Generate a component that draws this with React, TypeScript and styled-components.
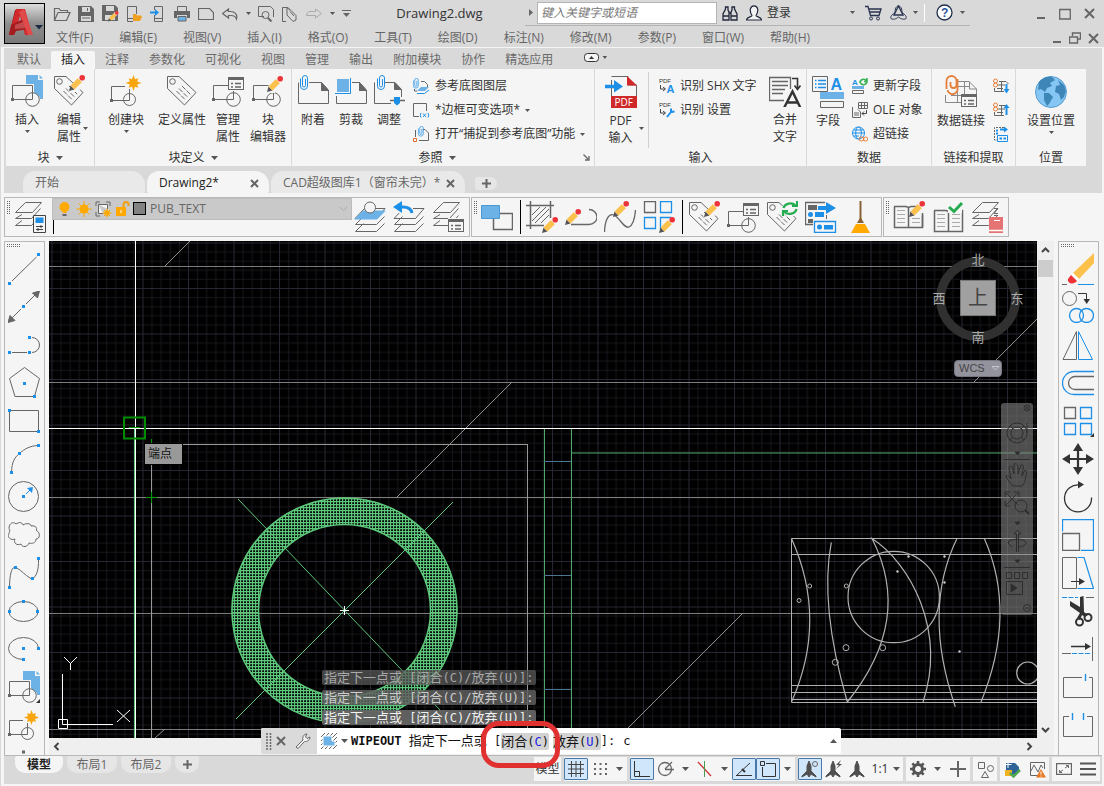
import React from "react";
import styled, { createGlobalStyle } from "styled-components";

const G = "#666666";
const B = "#1e8fe6";
const LB = "#6cb2e6";
const GREEN = "#5cc67a";

const GlobalStyle = createGlobalStyle`
  * { box-sizing: border-box; }
  body { margin: 0; background: #f5f5f5; }
  button, input, select { font: inherit; color: inherit; margin: 0; padding: 0; border: 0; background: none; }
  button { cursor: default; }
  svg { display: block; flex: none; }
`;

/* ---------- layout ---------- */
const Shell = styled.div`
  min-height: 100vh;
  display: flex;
  flex-direction: column;
  font: 12px/16px "Open Sans", "Noto Sans CJK SC", sans-serif;
  color: #333;
  background: #f5f5f5;
  overflow: hidden;
`;
const Header = styled.header`
  display: flex;
  height: 47px;
  background: #d9d9d9;
  padding-left: 4px;
`;
const Logo = styled.button`
  width: 41px;
  height: 41px;
  margin-top: 3px;
  border: 1px solid #000;
  background: linear-gradient(#dcdcdc, #8e8e8e 50%, #7a7a7a);
`;
const HeaderRows = styled.div`flex: 1; min-width: 0;`;
const TitleRow = styled.div`display: flex; height: 27px; padding: 0 3px 0 5px;`;
const Tools = styled.div`display: flex; align-items: center; height: 27px;`;
const IconButton = styled.button<{ $w?: number }>`
  display: flex;
  align-items: center;
  justify-content: center;
  flex: none;
  width: ${p => p.$w ?? 24}px;
  height: 24px;
`;
const Title = styled.h1`
  flex: 1;
  margin: 0;
  font-size: 13px;
  font-weight: 400;
  line-height: 26px;
  text-align: center;
  white-space: nowrap;
`;
const InfoCenter = styled.div`
  display: flex;
  align-items: center;
  width: 445px;
  height: 26px;
  border-bottom: 1px solid #b4b4b4;
`;
const Search = styled.input`
  width: 180px;
  height: 22px;
  margin-right: 1px;
  padding: 0 3px;
  background: #fff;
  border: 1px solid #b4b4b4;
  &::placeholder { color: #767676; font-style: italic; opacity: 1; }
`;
const Login = styled.button`width: 78px; text-align: left; padding-left: 1px;`;
const VRule = styled.i`width: 1px; height: 18px; background: #fff; margin: 0 5px 0 4px;`;
const WindowButtons = styled.div`
  display: flex;
  align-items: center;
  height: 27px;
  margin-left: 59px;
`;
const MenuRow = styled.nav`
  display: flex;
  align-items: center;
  height: 20px;
  gap: 26px;
  padding: 2px 0 0 11px;
  color: #666;
`;
const MenuEnd = styled.div`display: flex; margin-left: auto; padding-right: 2px;`;

const Frame = styled.div`
  flex: 1;
  display: flex;
  flex-direction: column;
  padding: 1px 2px 2px 3px;
  border-left: 1px solid #d9d9d9;
`;
const RibbonTabs = styled.nav`
  display: flex;
  align-items: flex-end;
  height: 21px;
  padding-left: 3px;
  background: #d9d9d9;
`;
const RibbonTab = styled.button<{ $on?: boolean }>`
  height: 18px;
  padding: 0 10px;
  line-height: 18px;
  border-radius: 2px 2px 0 0;
  color: ${p => (p.$on ? "#222" : "#6a6a6a")};
  background: ${p => (p.$on ? "#f5f5f5" : "transparent")};
`;
const Ribbon = styled.div`
  display: flex;
  gap: 1px;
  height: 97px;
  padding-left: 2px;
  background: #d9d9d9;
`;
const Panel = styled.section<{ $w: number }>`
  width: ${p => p.$w}px;
  flex: none;
  display: flex;
  flex-direction: column;
  background: #f5f5f5;
`;
const PanelBody = styled.div<{ $pl?: number }>`
  flex: 1;
  display: flex;
  padding-left: ${p => p.$pl ?? 0}px;
`;
const PanelTitle = styled.div<{ $pr?: number }>`
  position: relative;
  display: flex;
  align-items: center;
  justify-content: center;
  gap: 6px;
  height: 17px;
  padding-right: ${p => p.$pr ?? 0}px;
`;
const Launcher = styled.button`position: absolute; right: 4px; top: 5px;`;
const Big = styled.button<{ $w: number }>`
  position: relative;
  width: ${p => p.$w}px;
  display: flex;
  flex-direction: column;
  align-items: center;
  padding-top: 6px;
  line-height: 17px;
  white-space: nowrap;
  & > svg:first-child { margin-bottom: 4px; }
`;
const CornerCaret = styled.span`position: absolute; right: 2px; top: 58px;`;
const UnderCaret = styled.span`margin-top: 2px;`;
const SmallCol = styled.div<{ $ml?: number; $w?: number }>`
  margin-left: ${p => p.$ml ?? 0}px;
  width: ${p => (p.$w ? p.$w + "px" : "auto")};
  padding-top: 5px;
`;
const Small = styled.button`
  display: flex;
  align-items: center;
  gap: 5px;
  height: 24px;
  white-space: nowrap;
`;
const PanelRule = styled.i`width: 1px; margin: 3px 10px 1px 2px; background: #d0d0d0;`;

const DocTabs = styled.nav`
  display: flex;
  align-items: flex-end;
  height: 27px;
  padding-left: 17px;
  background: #d9d9d9;
`;
const DocTab = styled.button<{ $on?: boolean; $w: number }>`
  display: flex;
  align-items: center;
  justify-content: space-between;
  width: ${p => p.$w}px;
  height: 22px;
  padding: 2px 10px 0 12px;
  white-space: nowrap;
  color: ${p => (p.$on ? "#222" : "#666")};
  background: ${p => (p.$on ? "#f5f5f5" : "#e9e9e9")};
  border-radius: 12px 14px 2px 2px;
  margin-left: 2px;
`;
const NewDoc = styled.button`
  display: flex;
  align-items: center;
  justify-content: center;
  width: 22px;
  height: 13px;
  margin: 0 0 3px 10px;
  border-radius: 3px 8px 8px 3px;
  background: #e6e6e6;
`;

const ToolRow = styled.div`display: flex; gap: 1px; height: 48px; padding: 4px 0;`;
const ToolBox = styled.div`
  display: flex;
  align-items: center;
  height: 40px;
  border: 1px solid #b8b8b8;
  & > svg { align-self: flex-start; }
`;
const ToolButton = styled.button`
  display: flex;
  align-items: center;
  width: 39px;
  height: 38px;
  padding-left: 2px;
  flex: none;
`;
const ToolRule = styled.i`width: 1px; height: 34px; margin: 0 3px 0 2px; background: #000;`;
const ComboCell = styled.div`width: 301px; height: 38px; padding-left: 1px;`;
const Combo = styled.label`
  display: flex;
  align-items: center;
  height: 22px;
  background: #c9c9c9;
  border: 1px solid #bdbdbd;
  padding-left: 3px;
  gap: 3px;
  color: #666;
`;
const LayerSelect = styled.select`flex: 1; appearance: none; height: 20px; outline: 0;`;
const TextCaret = styled.i`display: block; width: 1px; height: 14px; margin-left: 1px; background: #000;`;

const Workspace = styled.main`flex: 1; display: flex; min-height: 514px; padding-right: 3px;`;
const SideBox = styled.div`
  width: 41px;
  flex: none;
  border: 1px solid #b8b8b8;
  border-bottom: 0;
  display: flex;
  flex-direction: column;
  align-items: flex-start;
  height: 514px;
  overflow: hidden;
`;
const SideButton = styled.button`
  display: flex;
  align-items: center;
  justify-content: center;
  width: 38px;
  height: 38px;
  flex: none;
`;
const SideGrip = styled.div`flex: none; height: 8px; padding: 2px 0 0 2px;`;
const Center = styled.div`
  position: relative;
  flex: 1;
  min-width: 0;
  margin: 0 4px;
  display: grid;
  grid-template-columns: 1fr 17px;
  grid-template-rows: 1fr 17px;
`;
const Canvas = styled.div`position: relative; overflow: hidden; background: #000;`;
const Sheet = styled.svg`position: absolute; left: 0; top: 0; width: 100%; height: 100%;`;
const VScroll = styled.div`
  display: flex;
  flex-direction: column;
  align-items: center;
  justify-content: space-between;
  background: #efefef;
  padding: 6px 0 5px;
`;
const Thumb = styled.i`width: 15px; height: 17px; margin: 7px 0 auto; background: #cdcdcd;`;
const HScroll = styled.div`
  grid-column: 1 / 3;
  display: flex;
  align-items: center;
  justify-content: space-between;
  padding: 0 21px 0 4px;
  background: #efefef;
`;
const Tip = styled.div`
  position: absolute;
  left: 95px;
  top: 202px;
  width: 39px;
  height: 22px;
  padding-left: 3px;
  line-height: 20px;
  background: #999;
  color: #111;
  border: 1px solid #000;
`;
const Compass = styled.div`
  position: absolute;
  right: 13px;
  top: 10px;
  width: 92px;
  height: 126px;
  display: grid;
  grid-template: 16px 62px 16px 1fr / 14px 1fr 14px;
  place-items: center;
  color: #aaa;
  font-size: 13px;
`;
const Ring = styled.i`
  position: absolute;
  left: 4px;
  top: 6px;
  width: 84px;
  height: 84px;
  border: 9px solid #303030;
  border-radius: 50%;
`;
const North = styled.span`position: relative; grid-area: 1 / 2;`;
const West = styled.span`position: relative; grid-area: 2 / 1;`;
const Top = styled.button`
  position: relative;
  grid-area: 2 / 2;
  width: 36px;
  height: 36px;
  background: #a0a0a0;
  border: 1px solid #777;
  color: #444;
  font-size: 20px;
  line-height: 32px;
`;
const East = styled.span`position: relative; grid-area: 2 / 3;`;
const South = styled.span`position: relative; grid-area: 3 / 2;`;
const Wcs = styled.button`
  grid-area: 4 / 1 / 5 / 4;
  align-self: end;
  display: flex;
  align-items: center;
  gap: 7px;
  width: 48px;
  height: 17px;
  padding-left: 4px;
  border: 1px solid #777784;
  border-radius: 4px;
  background: #93939d;
  color: #444;
  font: 11px/15px "Liberation Sans", sans-serif;
`;
const NavBar = styled.div`
  position: absolute;
  right: 4px;
  top: 162px;
  width: 32px;
  height: 212px;
  border-radius: 3px;
  background: rgba(130, 130, 130, 0.6);
`;
const mono = `font-family: "DejaVu Sans Mono", "Noto Sans CJK SC", monospace; font-size: 12px;`;
const Han = styled.span`font-size: 13px;`;
const History = styled.div`
  position: absolute;
  left: 273px;
  bottom: 30px;
  display: flex;
  flex-direction: column;
  gap: 5px;
  ${mono}
`;
const Past = styled.div<{ $c: string; $bg: string }>`
  height: 15px;
  padding: 0 2px;
  line-height: 15px;
  border-radius: 2px;
  white-space: pre;
  color: ${p => p.$c};
  background: ${p => p.$bg};
`;
const Command = styled.form`
  position: absolute;
  left: 212px;
  bottom: 1px;
  width: 580px;
  height: 26px;
  display: flex;
  align-items: center;
  background: #fff;
  color: #111;
  border-radius: 2px;
  overflow: hidden;
  white-space: pre;
  ${mono}
`;
const CommandHead = styled.div`
  display: flex;
  align-items: center;
  width: 56px;
  height: 26px;
  padding-left: 5px;
  background: #dadada;
`;
const Prompt = styled.span`margin-left: 3px;`;
const Option = styled.button`
  height: 17px;
  line-height: 17px;
  border-radius: 2px;
  background: #d3d3d3;
  margin-right: 4px;
  & + & { margin-right: 0; }
  b { font-weight: 400; color: #1a1ae0; }
`;
const CommandInput = styled.input`flex: 1; min-width: 0; outline: 0; padding-left: 8px;`;
const Highlight = styled.i`
  position: absolute;
  z-index: 2;
  left: 432px;
  bottom: -13px;
  width: 79px;
  height: 47px;
  border: 5px solid #e0302f;
  border-radius: 18px;
`;

const Footer = styled.footer`
  display: flex;
  height: 29px;
  padding: 0 2px 0 11px;
  background: #d9d9d9;
  border-top: 1px solid #b8b8b8;
`;
const LayoutTab = styled.button<{ $on?: boolean; $w?: number }>`
  display: flex;
  align-items: center;
  justify-content: center;
  width: ${p => p.$w ?? 50}px;
  margin-right: 4px;
  height: 17px;
  color: ${p => (p.$on ? "#222" : "#666")};
  font-weight: ${p => (p.$on ? 700 : 400)};
  background: ${p => (p.$on ? "#f5f5f5" : "#e6e6e6")};
  border-radius: 2px 2px 10px 10px;
`;
const Status = styled.div`display: flex; gap: 3px; margin-left: auto; height: 26px; padding-top: 1px;`;
const Group = styled.div`display: flex; align-items: center; height: 24px; background: #f5f5f5;`;
const StatusButton = styled.button<{ $on?: boolean; $w?: number }>`
  display: flex;
  align-items: center;
  justify-content: center;
  width: ${p => p.$w ?? 24}px;
  height: ${p => (p.$on ? 22 : 24)}px;
  white-space: nowrap;
  background: ${p => (p.$on ? "#cfe6fb" : "none")};
  border: ${p => (p.$on ? "1px solid #4a78a8" : "0")};
  border-radius: 1px;
`;

/* ---------- icon primitives ---------- */
type IcoProps = { w?: number; h?: number; children: React.ReactNode };
const Ico = ({ w = 32, h, children }: IcoProps) => (
  <svg width={w} height={h ?? w} viewBox={`0 0 ${w} ${h ?? w}`} fill="none" stroke={G} strokeWidth="1" aria-hidden="true">{children}</svg>
);
const Caret = () => (
  <svg width="5" height="3" viewBox="0 0 5 3" fill="#555" aria-hidden="true"><path d="M0 0h5L2.500 3z" /></svg>
);
const CaretL = ({ up }: { up?: boolean }) => (
  <svg width="7" height="4" viewBox="0 0 7 4" fill="#555" aria-hidden="true"><path d={up ? "M0 4h7L3.500 0z" : "M0 0h7L3.500 4z"} /></svg>
);
const Dot = ({ x, y, c = B }: { x: number; y: number; c?: string }) => <rect x={x - 1.5} y={y - 1.5} width="3" height="3" fill={c} stroke="none" />;
const Pencil = ({ x, y }: { x: number; y: number }) => (
  <g transform={`translate(${x} ${y})`} stroke="none">
    <path d="M0 16L1.500 10.500L5.500 14.500Z" fill="#555" />
    <path d="M1.500 10.500L9 3L13 7L5.500 14.500Z" fill="#fcc04c" />
    <path d="M9 3L10.500 1.500L14.500 5.500L13 7Z" fill="#fff" />
    <circle cx="13.200" cy="2.800" r="2.800" fill="#ee3338" />
  </g>
);
const Star = ({ x, y, r }: { x: number; y: number; r: number }) => {
  const pts = Array.from({ length: 16 }, (_, i) => {
    const q = i % 2 ? r * 0.5 : i % 4 ? r * 0.85 : r;
    const a = (i * Math.PI) / 8;
    return `${(x + q * Math.sin(a)).toFixed(1)},${(y - q * Math.cos(a)).toFixed(1)}`;
  }).join(" ");
  return <polygon points={pts} fill="#f7a50a" stroke="none" />;
};
const TagShape = () => (
  <>
    <path d="M1.500 1.500H13L30 17.500L18.500 30L1.500 13.500Z" />
    <circle cx="6.500" cy="6.500" r="2.800" />
    <path d="M16 11L25 20M13 13.500L22 22.500M10.500 16L19.500 25" strokeDasharray="5 1.500" />
  </>
);
const ListCard = ({ x, y }: { x: number; y: number }) => (
  <g transform={`translate(${x} ${y})`}>
    <rect x=".5" y=".5" width="15" height="12" fill="#f5f5f5" />
    <path d="M0 1.500H16" strokeWidth="3" />
    <path d="M3 6.500h2M7 6.500h6M3 10h2M7 10h6" strokeWidth="1.500" />
  </g>
);
const BlockShape = ({ solid }: { solid?: boolean }) => (
  <>
    {solid && <path d="M0 9H23V17L29 22V31H0Z" fill="#f5f5f5" stroke="none" />}
    <path d="M1.500 10.500H21.500V24.500H1.500Z" />
    <circle cx="21.500" cy="24.500" r="6.800" />
    <Dot x={1.500} y={24.500} c={G} />
  </>
);
const PageShape = () => <path d="M1.500 7.500V28.500H31.500V15.500L24.500 7.500H12M24.500 7.500V15.500H31.500Z" />;
const Layers = ({ fill = "none" }: { fill?: string }) => (
  <>
    <path d="M9.500 15.500L1.500 23.500H22.500L30.500 15.500M9.500 22.500L1.500 30.500H22.500L30.500 22.500" />
    <path d="M10.500 7.500H31L22.500 17.500H1Z" fill={fill} />
  </>
);
const LayersTop = () => (
  <>
    <path d="M11.500 1.500H27.500L18.500 11.500H1.500Z" />
    <path d="M8 13.500L1.500 17.500H17.500L26.500 7.500M8 19.500L1.500 24.500H17.500L26.500 14.500" />
  </>
);
const BookShape = () => (
  <>
    <path d="M2 9.500H14L16.500 10.500L19 9.500H30.500V30.500H2.500V9.500M16.500 10.500V31" strokeWidth="1.500" />
    <path d="M5 13.500h8M5 17.500h8M5 21.500h8M5 25.500h8M20 13.500h8M20 17.500h8M20 21.500h8M20 25.500h8" stroke="#aaa" />
  </>
);
const Grip = ({ horizontal }: { horizontal?: boolean }) => (
  <svg width={horizontal ? 14 : 7} height={horizontal ? 4 : 16} fill={G} aria-hidden="true">
    {Array.from({ length: 7 }, (_, i) => [0, 2].map(j => (
      <rect key={`${i}-${j}`} x={horizontal ? i * 2 : j + 2} y={horizontal ? j : i * 2 + 3} width="1" height="1" />
    )))}
  </svg>
);
const Cross = ({ s = 9, t = 2 }: { s?: number; t?: number }) => <Ico w={s}><path d={`M1 1L${s - 1} ${s - 1}M${s - 1} 1L1 ${s - 1}`} strokeWidth={t} /></Ico>;
const Plus = ({ s = 9, t = 2 }: { s?: number; t?: number }) => <Ico w={s}><path d={`M${s / 2} 0V${s}M0 ${s / 2}H${s}`} strokeWidth={t} /></Ico>;
const Clip = ({ x, y, c = B }: { x: number; y: number; c?: string }) => (
  <path transform={`translate(${x} ${y})`} stroke={c} d="M0.500 3.500V11a3.500 3.500 0 0 0 7 0V3a2.500 2.500 0 0 0-5 0V10.500a1.500 1.500 0 0 0 3 0V4" />
);

/* ---------- quick access icons ---------- */
const quick: [string, React.ReactNode][] = [
  ["打开", <Ico w={18} h={16}><path d="M1.500 14.500V2.500H6L7.500 4.500H14.500V6.500M1.500 14.500L5 6.500H17L13.500 14.500Z" strokeWidth="1.200" /></Ico>],
  ["保存", <Ico w={16}><path d="M0 0H13L16 3V16H0Z" fill={G} stroke="none" /><path d="M4 1H12V6H4ZM3 10H13V15H3Z" fill="#d9d9d9" stroke="none" /><path d="M4 12h8M9.500 2v3" /></Ico>],
  ["另存为", <Ico w={17}><path d="M0 0H13L16 3V16H0Z" fill={G} stroke="none" /><path d="M4 1H12V6H4ZM3 10H13V15H3Z" fill="#d9d9d9" stroke="none" /><g transform="translate(6 6) scale(.66)"><Pencil x={0} y={0} /></g></Ico>],
  ["从移动设备打开", <Ico w={16}><path d="M1.500 .5H10.500V8M1.500 .5V15.500H7" /><path d="M2 12.500H7" /><path d="M7 15V8H10L11 9.500H15L16 11L14 15Z" fill="#f0a020" stroke="none" /></Ico>],
  ["保存到移动设备", <Ico w={16}><path d="M4.500 4V.5H12.500V15.500H4.500V9M4.500 12.500H12.500" /><path d="M0 6.500H7" stroke={B} strokeWidth="2" /><path d="M5 3L9 6.500L5 10Z" fill={B} stroke="none" /></Ico>],
  ["打印", <Ico w={16}><path d="M3.500 5V.5H12.500V5" /><path d="M0 5H16V12H13V9H3V12H0Z" fill={G} stroke="none" /><path d="M4 10.500H12V15H4Z" fill={LB} stroke={G} /></Ico>],
  ["新建", <Ico w={16}><path d="M.5 2.500H11.500L15.500 6.500V13.500H.5Z" strokeWidth="1.200" /></Ico>],
  ["放弃", <Ico w={16}><path d="M6.500 3L.5 7.500L6.500 12V9.500H9C12 9.500 13.500 10 14.500 13C16 8 12 5.500 9 5.500H6.500Z" strokeWidth="1.200" /></Ico>],
];
const quick2: [string, React.ReactNode][] = [
  ["打印预览", <Ico w={16}><path d="M6 10.500H.5V.5H12.500L15.500 3.500V11" /><circle cx="7.500" cy="9" r="3.500" /><path d="M10 12L13.500 15.500" strokeWidth="2" /></Ico>],
  ["批处理打印", <Ico w={16}><path d="M4 15.500H.5V1.500H5L8 4.500" /><path d="M6 1.500L14 9.500V14L11 15.500L5 9V2Z" /><path d="M8 5.500L12 10" /></Ico>],
];

/* ---------- ribbon icons ---------- */
const PageBack = () => <><path d="M15 0H27V5H32V24H15Z" fill={LB} stroke="none" /><path d="M28.500 0L32 3.500H28.500Z" fill={LB} stroke="none" /></>;
const InsertIcon = () => <Ico><PageBack /><BlockShape solid /></Ico>;
const CreateIcon = () => <Ico><path d="M1.500 11.500H19.500V25.500H1.500Z" /><circle cx="19.500" cy="24.500" r="6" /><Dot x={1.500} y={25.500} c={G} /><path d="M15 2h6v12h-6z" fill="#f5f5f5" stroke="none" /><Star x={23.500} y={8} r={8} /></Ico>;
const TagIcon = ({ extra }: { extra?: React.ReactNode }) => <Ico><TagShape />{extra}</Ico>;
const TagPencilIcon = () => <TagIcon extra={<><path d="M15 16L31 0h1v12L20 18z" fill="#f5f5f5" stroke="none" /><Pencil x={16} y={0} /></>} />;
const BlockCardIcon = () => <Ico><BlockShape /><path d="M16 0h16v16H16z" fill="#f5f5f5" stroke="none" /><ListCard x={16} y={2} /></Ico>;
const BlockEditIcon = () => <Ico><BlockShape /><path d="M14 18L17 9h6v9z" fill="#f5f5f5" stroke="none" /><Pencil x={15} y={1} /></Ico>;
const AttachIcon = () => <Ico><PageShape /><path d="M24.500 7.500V15.500H31.500Z" fill={G} /><Clip x={3} y={0} /></Ico>;
const CropIcon = () => <Ico><PageShape /><path d="M24.500 7.500V15.500H31.500Z" fill={G} /><path d="M0 2h17v19H0z" fill="#f5f5f5" stroke="none" /><path d="M2 4H14V17H2Z" fill={LB} stroke="none" /><path d="M15.500 3V18.500H0" stroke={B} /></Ico>;
const AdjustIcon = () => <Ico><path d="M1.500 7.500V28.500H18M12 7.500H22L28.500 14.500V22" /><path d="M21.500 7.500V14.500H28.500Z" fill={G} /><Clip x={4} y={0} /><path d="M17 25.500H32" strokeWidth="1.500" /><path d="M21 22H27V28L24 30.500L21 28Z" fill={B} stroke="none" /></Ico>;
const PdfLabel = styled.text`font: 10px "Open Sans", sans-serif;`;
const PdfIcon = () => (
  <Ico w={34} h={33}>
    <path d="M7.500 1.500H24V10H32.500V21M7.500 5V21" /><path d="M23 1L33 10.500H23Z" fill="#d02828" stroke="none" />
    <path d="M7 21H33V33H7Z" fill="#d02828" stroke="none" />
    <PdfLabel x="10.500" y="31" fill="#fff" stroke="none">PDF</PdfLabel>
    <path d="M1 11.500H12" stroke={B} strokeWidth="3.500" /><path d="M10 5L19 11.500L10 17.500Z" fill={B} stroke="none" />
  </Ico>
);
const TinyText = styled.text`font: 6px "Liberation Sans", sans-serif;`;
const LetterText = styled.text<{ $s: number }>`font: 700 ${p => p.$s}px "Liberation Sans", sans-serif;`;
const ShxIcon = ({ tool }: { tool?: boolean }) => (
  <Ico w={16}>
    <TinyText x="0" y="5" fill="#333" stroke="none">PDF</TinyText>
    <path d="M1.500 7V11H6M4 9L6.500 11L4 13" stroke="#444" />
    {tool ? <path d="M8 15L12 10M12 6.500V10L15.500 9.500" stroke={B} strokeWidth="2" /> : <LetterText $s={11} x="7.500" y="15" fill={B} stroke="none">A</LetterText>}
  </Ico>
);
const MergeIcon = () => (
  <Ico><path d="M15 25.500H.5V2.500H21.500V14M3 6.500h16M3 10.500h16M3 14.500h13M3 18.500h11" strokeWidth="1.300" /><path d="M23 3.500H28.500V13M25.500 10.500L28.500 14.500L31.500 10.500" stroke="#333" strokeWidth="1.600" /><path d="M15 33L23.500 16.500L31.500 33M18 27.500H29" stroke="#333" strokeWidth="2.400" /></Ico>
);
const FieldIcon = () => (
  <Ico h={33}><path d="M.5 1.500H15.500V16.500H.5Z" /><path d="M3 5.500h1.500M3 9h1.500M3 12.500h1.500M6 5.500h8M6 9h8M6 12.500h8" stroke={B} strokeWidth="1.500" /><LetterText $s={16} x="18.500" y="15" fill={B} stroke="none">A</LetterText><path d="M8 17H32V24H8Z" fill={LB} stroke="none" /><path d="M8.500 26.500H31.500V32.500H8.500Z" /></Ico>
);
const UpdateFieldIcon = () => <Ico w={16}><LetterText $s={8} x="0" y="7" fill={B} stroke="none">A</LetterText><path d="M8 5a3.500 3.500 0 0 1 6.500-2M15 3a3.500 3.500 0 0 1-6.500 2M15 0V3.500H12" stroke="#35b050" strokeWidth="1.500" /><path d="M.5 12.500H11.500V15.500H.5Z" /><path d="M0 8H12V11H0Z" fill={LB} stroke="none" /></Ico>;
const OleIcon = () => <Ico w={16}><path d="M6.500 .5H15.500V6.500H6.500ZM6.500 3.500H15.500M9.500 .5V6.500M12.500 .5V6.500M.5 5V15.500H8.500V10L6 7.500M2 11h5M2 13h5" /><path d="M10 11.500H14.500V8M12 9.500L10 11.500L12 13.500" stroke="#444" /></Ico>;
const LinkIcon = () => <Ico w={16}><circle cx="6.500" cy="7" r="6" stroke={B} /><ellipse cx="6.500" cy="7" rx="2.800" ry="6" stroke={B} /><path d="M.5 7H12.500M1.500 4H11.500M1.500 10H7" stroke={B} /><ellipse cx="9.500" cy="13" rx="2.500" ry="2" stroke="#e8803a" /><ellipse cx="13.500" cy="13" rx="2.300" ry="2" stroke="#e8803a" /></Ico>;
const DataLinkIcon = () => (
  <Ico h={33}><path d="M12 6.500H24L31.500 14V20M.5 20V27.500H16M12 11.500H24M6 20.500H18M12.500 6.500V27.500M19.500 6.500V27.500M24.500 6.500V14H31.500" stroke="#888" /><ListCard x={16} y={19} />
    <g stroke="#e57f3c" strokeWidth="1.800"><path d="M1.500 14V6a5 5 0 0 1 10 0V10a3 3 0 0 1-6 0V7" /><path d="M12.500 4V13a5 5 0 0 1-10 2" /></g></Ico>
);
const TableLink = ({ up }: { up?: boolean }) => (
  <Ico w={17} h={16}><circle cx="2.500" cy="3" r="2" stroke="#e57f3c" /><circle cx="2.500" cy="7" r="2" stroke="#e57f3c" /><path d="M6 3.500H13L15.500 6M1.500 10V13.500H11M4 10.500H10M8.500 3.500V13.500M5 7H12" /><path d={up ? "M13.500 13V5" : "M13.500 6V13"} stroke={B} strokeWidth="2" /><path d={up ? "M10.500 6L13.500 2L16.500 6Z" : "M10.500 11L13.500 15.500L16.500 11Z"} fill={B} stroke="none" /></Ico>
);
const ExtractSmall = () => <Ico w={16}><path d="M11 1.500H1.500V14H4" strokeDasharray="2 1" /><path d="M3 4.500h2M3 7.500h2M7 3.500H12" stroke={B} strokeWidth="2" /><path d="M11 .5L15 3.500L11 6.500Z" fill={B} stroke="none" /><path d="M4.500 9.500H14.500V15.500H4.500Z" fill="#f5f5f5" stroke={B} /><path d="M6.500 12.500h2.500M10.500 12.500h2.500" stroke={B} strokeWidth="2" /></Ico>;
const GlobeIcon = () => (
  <Ico h={33}><circle cx="16" cy="17" r="15.500" fill="#86c6f4" stroke="#5b9fce" /><path d="M4 7C7 3 12 1 17 2L20 5L15 8L17 11L12 13L10 17L6 14L3 15ZM9 18L14 18L18 22L14 29L12 31L9 25ZM23 5L29 10L31 16L29 22L26 25L24 19L20 17L21 11L25 10Z" fill="#3e86b8" stroke="none" /></Ico>
);
const RefLayerIcon = () => <Ico w={17} h={16}><g transform="scale(.7)"><Clip x={0} y={0} /></g><path d="M8 3.500H11.500L14.500 6.500V9M1.500 11V13H4" /><path d="M8 9H16L12 13H4Z" fill={LB} stroke="none" /><path d="M4 15.500H11.500L16 12" stroke={B} /></Ico>;
const FrameVarIcon = () => <Ico w={17} h={16}><path d="M6 14.500H.5V1.500H13.500V9" /><path d="M8 11Q6.500 13 8 15.500M15 11Q16.500 13 15 15.500M10 11.500L13 15M13 11.500L10 15" stroke={B} /></Ico>;
const SnapRefIcon = () => <Ico w={17} h={16}><path d="M2.500 11V4M10 3.500H12L15.500 7V14.500H6" /><g transform="translate(5 0) scale(.7)"><Clip x={0} y={0} /></g><path d="M.5 12.500H3.500V15.500H.5Z" stroke="#e07030" /></Ico>;

/* ---------- toolbar icons ---------- */
const LayerPropIcon = () => <Ico h={33}><LayersTop /><path d="M19.500 14.500H31.500V31.500H19.500Z" fill="#f5f5f5" stroke="#444" /><path d="M21.500 16.500H29.500V22H21.500Z" fill={B} stroke="none" /><path d="M22 25.500H29M22 28.500H29M27 24V27M24 27V30" stroke="#444" /></Ico>;
const LayerCurIcon = () => <Ico><Layers /><path d="M9 9.500H32L23 18.500H0Z" fill={LB} stroke="none" /><circle cx="16" cy="6.500" r="5.500" fill="#f5f5f5" /></Ico>;
const LayerPrevIcon = () => <Ico><Layers /><path d="M0 0H20V12H0Z" fill="#f5f5f5" stroke="none" /><path d="M19 12C18 7 14 5.500 8 6" stroke={B} strokeWidth="3" /><path d="M0 6L9 0V12Z" fill={B} stroke="none" /></Ico>;
const LayerStateIcon = () => <Ico><LayersTop /><path d="M16 17h16v15H16z" fill="#f5f5f5" stroke="none" /><ListCard x={16} y={18} /></Ico>;
const DrawOrderIcon = () => <Ico><path d="M12.500 12.500H31.500V28.500H12.500Z" strokeWidth="1.500" /><path d="M.5 4.500H18.500V17.500H.5Z" fill={LB} stroke="#4a98d4" /></Ico>;
const HatchEditIcon = () => <Ico><path d="M4.500 0V28M24.500 0V17M0 4.500H28M0 24.500H18" strokeWidth="1.500" /><path d="M6 14L14 6M6 20L20 6M9 22L23 8M15 22L23 14" /><Pencil x={16} y={16} /></Ico>;
const PlineEditIcon = () => <Ico><path d="M6 23.500H24a8 7.500 0 0 0 0-15" strokeWidth="1.300" /><Pencil x={0} y={8} /></Ico>;
const SplineEditIcon = () => <Ico><path d="M.5 31C1 18 5 12 10 14C16 17 20 28 25 26C29 24 31 15 31.500 9" strokeWidth="1.300" /><Pencil x={9} y={0} /></Ico>;
const ArrayShape = () => <><path d="M1.500 2.500H12.500V13.500H1.500Z" strokeWidth="1.300" /><path d="M17.500 2.500H28.500V13.500H17.500ZM1.500 18.500H12.500V29.500H1.500ZM17.500 18.500H28.500V29.500H17.500Z" stroke={B} strokeWidth="1.300" /></>;
const ArrayEditIcon = () => <Ico><g transform="translate(0 -2)"><ArrayShape /></g><path d="M16 31L29 15h3v17h-16z" fill="#f5f5f5" stroke="none" /><Pencil x={16} y={16} /></Ico>;
const SyncIcon = () => <TagIcon extra={<><circle cx="24" cy="8" r="8" fill="#f5f5f5" stroke="none" /><path d="M17.500 7a7 6 0 0 1 12-2.500M30.500 8a7 6 0 0 1-12 3M31 0V5H26M17 15V10H22" stroke="#24ac50" strokeWidth="2.200" /></>} />;
const ExtractIcon = () => <Ico><path d="M20 1.500H.5V23.500H8" strokeWidth="1.300" /><path d="M3 4H12V9H3ZM3 18H8V22H3Z" fill={G} stroke="none" /><circle cx="5.500" cy="13.500" r="2.500" fill={B} stroke="none" /><path d="M10 11H19V16H10Z" fill={B} stroke="none" /><path d="M13 7H22" stroke={B} strokeWidth="4" /><path d="M21 1L31 7L21 13Z" fill={B} stroke="none" /><path d="M21.500 14V18" /><path d="M9.500 20.500H30.500V31.500H9.500Z" fill="#f5f5f5" stroke={B} strokeWidth="1.300" /><circle cx="14.500" cy="26" r="2.500" fill={B} stroke="none" /><path d="M19 24H28V28.500H19Z" fill={B} stroke="none" /></Ico>;
const BroomIcon = () => <Ico><path d="M16.500 0V19" stroke="#8a6134" strokeWidth="2" /><path d="M16.500 16L20 22H13Z" fill="#8a6134" stroke="none" /><path d="M12 23H21L26 32H7Z" fill="#ffa902" stroke="none" /></Ico>;
const BookEditIcon = () => <Ico><g transform="translate(-1 -4)"><BookShape /></g><path d="M17 16L26 3h6v10l-10 4z" fill="#f5f5f5" stroke="none" /><path d="M29.500 12V26" strokeWidth="1.500" /><Pencil x={16} y={0} /></Ico>;
const BookCheckIcon = () => <Ico><BookShape /><path d="M16 1h14v11H16z" fill="#f5f5f5" stroke="none" /><path d="M17 6L22 10.500L30 2" stroke="#26aa50" strokeWidth="3" /></Ico>;
const LayerBookIcon = () => <Ico><LayersTop /><path d="M23 7.500H27L23 12.500H27M23 14.500H27" /><path d="M18 16H32V32H18Z" fill="#e57373" stroke="none" /><path d="M18 29.500H32" stroke="#fff" strokeWidth="1.500" /><path d="M23 19.500H29" stroke="#fff" /></Ico>;

/* ---------- side tool icons ---------- */
const drawTools: [string, React.ReactNode][] = [
  ["直线", <><path d="M4 28L28.500 4" /><Dot x={1.500} y={30.500} /><Dot x={30.500} y={1.500} /></>],
  ["构造线", <><path d="M4 27L13 18M18 13L27 4" /><path d="M31.500 0L29.500 7L24.500 2ZM0 31.500L2 24.500L7 29.500Z" fill={G} /><Dot x={15.500} y={15.500} /></>],
  ["多段线", <><path d="M4 23.500H19M24 8.500a7.500 7.500 0 0 1 0 15" /><Dot x={1.500} y={23.500} /><Dot x={21.500} y={23.500} /><Dot x={21.500} y={8.500} /></>],
  ["多边形", <><path d="M16.500 .5L31.500 11.500L26.500 29.500H7L1.500 11.500Z" /><Dot x={16.500} y={16.500} /><Dot x={26.500} y={29.500} /></>],
  ["矩形", <><path d="M1.500 5.500H30.500V26.500H1.500Z" /><Dot x={1.500} y={5.500} /><Dot x={30.500} y={26.500} /></>],
  ["圆弧", <><path d="M3.500 29C4 19 6 15 11.500 10.500C17 5.500 22 3 30 2.500" /><Dot x={3.500} y={29.500} /><Dot x={11.500} y={10.500} /><Dot x={30.500} y={2.500} /></>],
  ["圆", <><circle cx="15.500" cy="15.500" r="15" /><path d="M18 13L22 9" stroke={B} /><path d="M25 6L24 12L19 7Z" fill={B} stroke="none" /><Dot x={15.500} y={15.500} /></>],
  ["修订云线", <path d="M2 12C-1 7 4 1 8 5C11 3 14 3 15 6C18 4 23 4 23 7C27 6 30 9 28 11C33 14 32 20 28 20C28 24 24 25 21 24C20 28 14 29 13 25C9 27 5 24 7 20C2 22-1 17 1 15C1 14 1 13 2 12Z" />],
  ["样条曲线", <><path d="M1.500 29C2 15 4 8 9 11C14 14 17 18 22 21C27 24 31 14 30.500 3" /><Dot x={1.500} y={30.500} /><Dot x={7.500} y={10.500} /><Dot x={24.500} y={21.500} /><Dot x={30.500} y={1.500} /></>],
  ["椭圆", <><ellipse cx="15.500" cy="16.500" rx="14.500" ry="10" /><Dot x={15.500} y={6.500} /><Dot x={1.500} y={16.500} /><Dot x={29.500} y={16.500} /></>],
  ["椭圆弧", <><path d="M15.500 26.500A15 11 0 1 1 30.500 15.500" /><Dot x={15.500} y={15.500} /><Dot x={30.500} y={15.500} /><Dot x={15.500} y={26.500} /></>],
  ["插入块", <><PageBack /><BlockShape solid /><path d="M32 28V32H28Z" fill="#333" stroke="none" /></>],
  ["创建块", <><path d="M1.500 11.500H19.500V25.500H1.500Z" /><circle cx="19.500" cy="24.500" r="6" /><Dot x={1.500} y={25.500} c={G} /><path d="M15 2h6v12h-6z" fill="#f5f5f5" stroke="none" /><Star x={23.500} y={8.500} r={7.500} /></>],
  ["点", <Dot x={15.500} y={5} c={G} />],
];
const modifyTools: [string, React.ReactNode][] = [
  ["删除", <><path d="M32 0V10L17 26L11 20Z" fill="#fcc04c" stroke="none" /><path d="M11 20L17 26L15 28L9 22Z" fill="#fff" stroke="none" /><path d="M9 22L15 28C12 32 5 31 6 26Z" fill="#ee3338" stroke="none" /><path d="M0 31.500H5" /><path d="M16 31.500H32" stroke={B} /></>],
  ["复制", <><circle cx="7.500" cy="7.500" r="7" /><path d="M16 2.500H24.500V9" stroke="#333" /><path d="M21.500 8H28L24.700 13Z" fill="#333" stroke="none" /><g stroke={B} strokeWidth="1.300"><circle cx="14.500" cy="24.500" r="7" /><circle cx="24.500" cy="24.500" r="7" /></g></>],
  ["镜像", <><path d="M14.500 2.500V30.500H1Z" /><path d="M16.500 2.500V30.500H30.500Z" stroke={B} /></>],
  ["偏移", <><path d="M32 4.500H12a11.500 11.500 0 0 0 0 23H32" stroke={B} strokeWidth="1.300" /><path d="M32 9.500H13a6.500 6.500 0 0 0 0 13H32" strokeWidth="1.300" /></>],
  ["阵列", <><g transform="translate(1 0)"><ArrayShape /></g><path d="M32 28V32H28Z" fill="#333" stroke="none" /></>],
  ["移动", <><path d="M16 4V28M4 16H28" stroke="#333" strokeWidth="2.200" /><path d="M16 0L21 8H11ZM16 32L11 24H21ZM0 16L8 11V21ZM32 16L24 21V11Z" fill="#333" stroke="none" /></>],
  ["旋转", <><path d="M29.500 16.500A13.500 13.500 0 1 1 18 4" stroke="#333" strokeWidth="1.300" /><path d="M16 0L22 3.500L16 7.500Z" fill="#333" stroke="none" /></>],
  ["缩放", <><path d="M.5 12.500V.5H31.500V31.500H19" stroke={B} strokeWidth="1.300" /><path d="M.5 14.500H17.500V31.500H.5Z" strokeWidth="1.300" /></>],
  ["拉伸", <><path d="M.5 .5H14.500V31.500H.5Z" /><path d="M15.500 .5H22L31.500 31.500H15.500" stroke={B} strokeWidth="1.200" /><path d="M9 24.500H19" stroke="#333" /><path d="M17 21L23 24.500L17 28Z" fill="#333" stroke="none" /></>],
  ["修剪", <><path d="M0 2.500H16" stroke={B} strokeDasharray="5 1.500" /><path d="M24 2.500H32" /><path d="M18 2L21.500 1L22 17L26 20L23 22L20 20L18 25L15 23L18 18L8 11V6L18 12Z" fill="#333" stroke="none" /><circle cx="17.500" cy="27" r="3.500" stroke="#333" strokeWidth="2" /><circle cx="26" cy="22.500" r="3.500" stroke="#333" strokeWidth="2" /></>],
  ["延伸", <><path d="M9 13.500H25" stroke="#333" strokeWidth="1.500" /><path d="M23 10L29 13.500L23 17Z" fill="#333" stroke="none" /><path d="M30.500 4V28M0 20.500H9" /><path d="M10 20.500H29" stroke={B} strokeDasharray="5 1.500" /></>],
  ["打断于点", <><path d="M20 6.500H1.500V26.500H30.500V6.500H27" /><path d="M23.500 3V10" stroke={B} strokeWidth="1.400" /></>],
  ["打断", <><path d="M7 7.500H1.500V27.500H30.500V7.500H25" /><path d="M10.500 4V11M21.500 4V11" stroke={B} strokeWidth="1.400" /></>],
];

/* ---------- drawing area ---------- */
const Drawing = () => (
  <Sheet fill="none" aria-label="图形">
    <defs>
      <pattern id="grid" x="51.500" y="242.500" width="45.500" height="45.500" patternUnits="userSpaceOnUse">
        <path d="M9.600 0V46M18.700 0V46M27.800 0V46M36.900 0V46M0 9.600H46M0 18.700H46M0 27.800H46M0 36.900H46" stroke="#17171d" />
        <path d="M.5 0V46M0 .5H46" stroke="#272733" />
      </pattern>
      <pattern id="hatch" width="3" height="3" patternUnits="userSpaceOnUse">
        <path d="M0 .5H3M.5 0V3" stroke={GREEN} strokeWidth="1.300" />
      </pattern>
    </defs>
    <g transform="translate(-49 -241)">
      <rect x="49" y="241" width="3000" height="2000" fill="url(#grid)" />
      <path d="M49 266.500H3000M49 382.500H3000M49 497.500H3000M49 613.500H3000M49 729.500H3000" stroke="#7d7d7d" />
      <path d="M190 241L165 266M512 382L396 498M743 613L627 729M165 729L155 738M1038 318L974 382" stroke="#8f8f8f" />
      <path d="M151.500 738V445.500M151 444.500H528M527.500 444V738" stroke="#999" />
      <path d="M544.500 429V738M571.500 429V738M571 453H3000" stroke="#4ea867" />
      <path d="M544 461.500H571M544 575.500H571M544 689.500H571" stroke="#4a7694" />
      <circle cx="344.500" cy="610.500" r="99.500" stroke="url(#hatch)" strokeWidth="27" />
      <circle cx="344.500" cy="610.500" r="112.500" stroke={GREEN} strokeWidth="1.500" />
      <circle cx="344.500" cy="610.500" r="86" stroke={GREEN} strokeWidth="1.500" />
      <path d="M238 499L441 711M453 502L236 719" stroke={GREEN} />
      <path d="M340 610.500H349M344.500 606V615" stroke="#fff" />
      <g stroke="#b0b0b0">
        <path d="M3000 538.500H791.500V702.500H3000M792 554.500H3000M792 685.500H3000M792 692.500H3000M792 699.500H3000" />
        <path d="M791.500 538.500Q828 620 791.500 702M831.300 542.300Q819.300 605 847.300 702Q913.700 620 872 538.500C910 563 946.700 630 923 702M957 538.500Q922 610 955.300 706.700M984.300 538.500Q1017.300 613 981 702" strokeWidth="1.200" />
        <circle cx="893.700" cy="597" r="45.700" strokeWidth="1.200" /><circle cx="1027.700" cy="673" r="11" strokeWidth="1.200" />
        <circle cx="809.700" cy="586" r="2" /><circle cx="799" cy="600.500" r="2" /><circle cx="846.300" cy="586" r="2" />
        <circle cx="846" cy="647.700" r="3" /><circle cx="882.700" cy="647.700" r="3" /><circle cx="835.300" cy="662.300" r="3" />
        <g fill="#c8c8c8" stroke="none"><circle cx="908.500" cy="556.500" r="1.200" /><circle cx="944.500" cy="556.500" r="1.200" /><circle cx="897.500" cy="571.500" r="1.200" /><circle cx="944.500" cy="582.500" r="1.200" /><circle cx="959.500" cy="651.500" r="1.200" /></g>
      </g>
      <path d="M134.500 428V738" stroke={GREEN} />
      <path d="M135.500 241V738M49 428.500H3000" stroke="#fff" />
      <path d="M124 417.500H145V438.500H124Z" stroke="#008c00" strokeWidth="2" />
      <path d="M151.500 439V443M151.500 492V503M146 497.500H157M129 427.500H140" stroke="#009a00" />
      <path d="M62.500 674V724.500H113M58.500 719.500H67.500V728.500H58.500ZM117 710L130 722M130 710L117 722M64 657L70.500 663.500L77 657M70.500 663V670" stroke="#fff" />
    </g>
  </Sheet>
);
const NavIcons = () => (
  <svg width="32" height="212" fill="none" stroke="#2e2e2e" aria-hidden="true">
    <circle cx="26" cy="5" r="3" /><path d="M24.500 3.500l3 3m0-3l-3 3" />
    <circle cx="16" cy="30" r="10" /><circle cx="16" cy="30" r="6" /><path d="M9 23l3 3M23 23l-3 3M9 37l3-3M23 37l-3-3M26 20v10" />
    <path d="M14 49h5l-2.500 3z" fill="#2e2e2e" /><path d="M3 56.500h26" />
    <path d="M12 83C9 79 6 77 5 73C7 72 9 74 10 76L8 64C10 62 12 64 12 67L13 71L13 61C15 60 17 61 17 64V71L20 62C22 61 23 63 22 66L21 73L24 67C26 67 26 69 25 72C24 78 24 80 21 83Z" />
    <path d="M5 90l12 12M17 90L5 102M4 94v-5h5M13 89h5v5M4 98v5h5" /><circle cx="20" cy="103" r="6" /><path d="M24 107l4 4" strokeWidth="2" />
    <path d="M14 119h5l-2.500 3z" fill="#2e2e2e" /><path d="M15.500 149V131H13L16.500 127L20 131H17.500V149M7 140a9 4 0 1 1 10 4M11 136l-4 4l4 4" />
    <path d="M14 157h5l-2.500 3z" fill="#2e2e2e" /><path d="M3 164.500h26M5.500 169.500h5v6h-5zM13.500 169.500h5v6h-5zM21.500 169.500h5v6h-5zM5.500 178.500h16v13h-16z" /><path d="M10 181v8l6-4z" fill="#2e2e2e" /><circle cx="26" cy="205" r="3.500" /><path d="M24 205h4" />
  </svg>
);

const PastText = () => <><Han>指定下一点或</Han> [<Han>闭合</Han>(C)/<Han>放弃</Han>(U)]:</>;

const menus = ["文件(F)", "编辑(E)", "视图(V)", "插入(I)", "格式(O)", "工具(T)", "绘图(D)", "标注(N)", "修改(M)", "参数(P)", "窗口(W)", "帮助(H)"];
const ribbonTabs = ["默认", "插入", "注释", "参数化", "可视化", "视图", "管理", "输出", "附加模块", "协作", "精选应用"];

const Plane = ({ kind }: { kind: number }) => (
  <Ico w={18}><path d="M8 1L10 6V11L15 16V17L10 14L8 17L6 14L1 17V16L6 11V6Z" fill="#505050" stroke="#505050" />
    {kind === 0 && <circle cx="14" cy="4" r="2.500" />}
    {kind === 1 && <path d="M16 0L11 5H14L11 9L17 4H14Z" fill="#505050" stroke="none" />}
  </Ico>
);

export default function App() {
  return (
    <Shell>
      <GlobalStyle />
      <Header>
        <Logo aria-label="应用程序菜单">
          <svg width="38" height="34" viewBox="0 0 38 34" aria-hidden="true">
            <path d="M10 3L17 2L10 20L9 28H4Z" fill="#8e1416" /><path d="M11 2H20L27 28H20L15 9L9 28H4Z" fill="#d2292c" />
            <path d="M6 18L18 12L24 22L11 24L9 28H4Z" fill="#a51c1f" /><path d="M10 18L18 15L22 21L10 22Z" fill="#c34a4c" /><path d="M19 2L28 28H23L14 5Z" fill="#e14a4a" />
            <path d="M30 18H38L34 22.500Z" fill="#1b2a44" />
          </svg>
        </Logo>
        <HeaderRows>
          <TitleRow>
            <Tools>
              {quick.map(([n, i]) => <IconButton key={n} aria-label={n}>{i}</IconButton>)}
              <IconButton $w={12} aria-label="放弃列表"><Caret /></IconButton>
              {quick2.map(([n, i]) => <IconButton key={n} aria-label={n}>{i}</IconButton>)}
              <IconButton aria-label="重做"><Ico w={16}><path d="M9.500 3L15.500 7.500L9.500 12V9.500H.5C1 7 2 5.500 4 5.500H9.500Z" stroke="#aaa" /></Ico></IconButton>
              <IconButton $w={12} aria-label="重做列表"><Caret /></IconButton>
              <IconButton $w={16} aria-label="自定义"><Ico w={9} h={7}><path d="M0 .500H9" /><path d="M1 3H8L4.500 7Z" fill={G} stroke="none" /></Ico></IconButton>
            </Tools>
            <Title>Drawing2.dwg</Title>
            <InfoCenter>
              <IconButton $w={12} aria-label="展开"><Ico w={4} h={7}><path d="M0 0L4 3.500L0 7Z" fill={G} stroke="none" /></Ico></IconButton>
              <Search aria-label="搜索" placeholder="键入关键字或短语" />
              <IconButton aria-label="查找"><Ico w={16}><g stroke="#20283a" strokeWidth="1.300"><path d="M3.500 2H6V5L7 7V15H1V9L3.500 4ZM12.500 2H10V5L9 7V15H15V9L12.500 4ZM7 8H9M1 11H7M9 11H15" /></g></Ico></IconButton>
              <IconButton aria-label="用户"><Ico w={16}><path d="M6 10.500C3 6 4 .8 8 .8S13 6 10 10.500C10 12 15.500 12 15.500 15H.5C.5 12 6 12 6 10.500Z" fill="#f2f2f2" stroke="#20283a" strokeWidth="1.200" /></Ico></IconButton>
              <Login>登录</Login>
              <IconButton $w={16} aria-label="登录菜单"><Caret /></IconButton>
              <IconButton $w={26} aria-label="应用商店"><Ico w={17} h={16}><path d="M0 1.500H3L5.500 10.500H14L16 4H4M5 7H15" stroke="#2a3350" strokeWidth="1.300" /><circle cx="6" cy="13.500" r="1.500" stroke="#2a3350" /><circle cx="13" cy="13.500" r="1.500" stroke="#2a3350" /></Ico></IconButton>
              <IconButton aria-label="Autodesk"><Ico w={17} h={16}><path d="M8.500 1L13 10H4Z" stroke="#2a3350" strokeWidth="1.300" /><path d="M8.500 1C6 1 5 4 5 8C2 9 0 12 1 13.500C3 15 6 14 8.500 12C11 14 14 15 16 13.500C17 12 15 9 12 8C12 4 11 1 8.500 1Z" stroke="#2a3350" /></Ico></IconButton>
              <IconButton $w={10} aria-label="更多"><Caret /></IconButton>
              <VRule />
              <IconButton $w={28} aria-label="帮助"><Ico w={17}><circle cx="8.500" cy="8.500" r="7.500" fill="#fff" stroke="#20304a" strokeWidth="1.300" /><LetterText $s={12} x="5" y="13" fill="#2b55a0" stroke="none">?</LetterText></Ico></IconButton>
              <IconButton $w={8} aria-label="帮助菜单"><Caret /></IconButton>
            </InfoCenter>
            <WindowButtons>
              <IconButton aria-label="最小化"><Ico w={12}><path d="M2 10H10" strokeWidth="2" /></Ico></IconButton>
              <IconButton aria-label="最大化"><Ico w={12}><path d="M.7 1.500H11.300V11H.7Z" strokeWidth="1.300" /></Ico></IconButton>
              <IconButton aria-label="关闭"><Cross s={11} /></IconButton>
            </WindowButtons>
          </TitleRow>
          <MenuRow>
            {menus.map(m => <button key={m}>{m}</button>)}
            <MenuEnd>
              <IconButton $w={18} aria-label="最小化图形"><Ico w={10}><path d="M1 9H9" strokeWidth="2" /></Ico></IconButton>
              <IconButton $w={18} aria-label="还原图形"><Ico w={12}><path d="M3.500 4V1H11.500V7H9M.5 5H8.500V11H.5Z" strokeWidth="1.400" /></Ico></IconButton>
              <IconButton $w={18} aria-label="关闭图形"><Cross s={11} /></IconButton>
            </MenuEnd>
          </MenuRow>
        </HeaderRows>
      </Header>

      <Frame>
        <RibbonTabs>
          {ribbonTabs.map(t => <RibbonTab key={t} $on={t === "插入"}>{t}</RibbonTab>)}
          <IconButton $w={64} aria-label="最小化功能区"><Ico w={23} h={9}><rect x=".5" y=".5" width="14" height="8" rx="3" fill="#f5f5f5" stroke="#333" /><path d="M5 6H10L7.500 3Z" fill="#333" stroke="none" /><path d="M18.500 3H23L21 6Z" fill="#555" stroke="none" /></Ico></IconButton>
        </RibbonTabs>
        <Ribbon>
          <Panel $w={88}>
            <PanelBody>
              <Big $w={42}><InsertIcon />插入<UnderCaret><Caret /></UnderCaret></Big>
              <Big $w={42}><TagPencilIcon />编辑<br />属性<CornerCaret><Caret /></CornerCaret></Big>
            </PanelBody>
            <PanelTitle>块<CaretL /></PanelTitle>
          </Panel>
          <Panel $w={196}>
            <PanelBody>
              <Big $w={62}><CreateIcon />创建块<UnderCaret><Caret /></UnderCaret></Big>
              <Big $w={50}><TagIcon />定义属性</Big>
              <Big $w={42}><BlockCardIcon />管理<br />属性</Big>
              <Big $w={38}><BlockEditIcon />块<br />编辑器</Big>
            </PanelBody>
            <PanelTitle>块定义<CaretL /></PanelTitle>
          </Panel>
          <Panel $w={302}>
            <PanelBody $pl={2}>
              <Big $w={38}><AttachIcon />附着</Big>
              <Big $w={38}><CropIcon />剪裁</Big>
              <Big $w={38}><AdjustIcon />调整</Big>
              <SmallCol $ml={5}>
                <Small><RefLayerIcon />参考底图图层</Small>
                <Small><FrameVarIcon />*边框可变选项*<Caret /></Small>
                <Small><SnapRefIcon />打开“捕捉到参考底图”功能<Caret /></Small>
              </SmallCol>
            </PanelBody>
            <PanelTitle $pr={12}>参照<CaretL /><Launcher aria-label="参照设置"><Ico w={7}><path d="M.5 .5L5 5M6 2V6H2" strokeWidth="1.300" /></Ico></Launcher></PanelTitle>
          </Panel>
          <Panel $w={211}>
            <PanelBody>
              <Big $w={51}><PdfIcon />PDF<br />输入<CornerCaret><Caret /></CornerCaret></Big>
              <PanelRule />
              <SmallCol $w={105}>
                <Small><ShxIcon />识别 SHX 文字</Small>
                <Small><ShxIcon tool />识别 设置</Small>
              </SmallCol>
              <Big $w={42}><MergeIcon />合并<br />文字</Big>
            </PanelBody>
            <PanelTitle>输入</PanelTitle>
          </Panel>
          <Panel $w={124}>
            <PanelBody>
              <Big $w={42}><FieldIcon />字段</Big>
              <SmallCol $ml={3}>
                <Small><UpdateFieldIcon />更新字段</Small>
                <Small><OleIcon />OLE 对象</Small>
                <Small><LinkIcon />超链接</Small>
              </SmallCol>
            </PanelBody>
            <PanelTitle>数据</PanelTitle>
          </Panel>
          <Panel $w={83}>
            <PanelBody>
              <Big $w={58}><DataLinkIcon />数据链接</Big>
              <SmallCol $ml={3}>
                <Small aria-label="从源下载"><TableLink /></Small>
                <Small aria-label="上载到源"><TableLink up /></Small>
                <Small aria-label="提取数据"><ExtractSmall /></Small>
              </SmallCol>
            </PanelBody>
            <PanelTitle>链接和提取</PanelTitle>
          </Panel>
          <Panel $w={70}>
            <PanelBody><Big $w={70}><GlobeIcon />设置位置<UnderCaret><Caret /></UnderCaret></Big></PanelBody>
            <PanelTitle>位置</PanelTitle>
          </Panel>
        </Ribbon>

        <DocTabs>
          <DocTab $w={122}>开始</DocTab>
          <DocTab $on $w={122}>Drawing2*<Cross /></DocTab>
          <DocTab $w={194}>CAD超级图库1（窗帘未完）*<Cross /></DocTab>
          <NewDoc aria-label="新图形"><Plus /></NewDoc>
        </DocTabs>

        <ToolRow>
          <ToolBox>
            <Grip />
            <ToolButton aria-label="图层特性"><LayerPropIcon /></ToolButton>
            <ComboCell>
              <Combo>
                <Ico w={17}><circle cx="8.500" cy="6" r="5" fill="#ffa902" stroke="none" /><path d="M6.500 10h4v2h-4z" fill="#ffa902" stroke="none" /><path d="M6.500 13h4v2h-4z" fill={G} stroke="none" /></Ico>
                <Ico w={16}><circle cx="8" cy="8" r="4.500" fill="#ffa902" stroke="none" /><path d="M8 0V16M0 8H16M2.500 2.500L13.500 13.500M13.500 2.500L2.500 13.500" stroke="#ffa902" /></Ico>
                <Ico w={17}><path d="M1 5V1H5M11 1H15V5M1 11V15H5" /><path d="M3.500 3.500H12.500V8M3.500 3.500V12.500H8" fill="#f5f5f5" /><circle cx="12" cy="12" r="2.800" fill="#ffa902" stroke="none" /><path d="M12 7.500V16.500M7.500 12H16.500M9 9L15 15M15 9L9 15" stroke="#ffa902" /></Ico>
                <Ico w={15} h={16}><path d="M1 6H11V15H1Z" fill="#ffa902" stroke="none" /><path d="M8.500 6V3.500a2.500 2.500 0 0 1 5 0V5" stroke="#f0a010" strokeWidth="2" /><path d="M6 9v3" stroke="#fff" /></Ico>
                <Ico w={14}><rect x=".5" y=".5" width="12" height="12" fill="#828282" stroke="#000" /></Ico>
                <LayerSelect aria-label="图层"><option>PUB_TEXT</option></LayerSelect>
                <Ico w={13} h={6}><path d="M2 1L5.500 4.500L9 1" stroke="#aaa" /></Ico>
              </Combo>
              <TextCaret />
            </ComboCell>
            <ToolButton aria-label="将对象的图层置为当前"><LayerCurIcon /></ToolButton>
            <ToolButton aria-label="上一个图层"><LayerPrevIcon /></ToolButton>
            <ToolButton aria-label="图层状态"><LayerStateIcon /></ToolButton>
          </ToolBox>
          <ToolBox>
            <Grip />
            <ToolButton aria-label="绘图次序"><DrawOrderIcon /></ToolButton>
            <ToolRule />
            <ToolButton aria-label="编辑图案填充"><HatchEditIcon /></ToolButton>
            <ToolButton aria-label="编辑多段线"><PlineEditIcon /></ToolButton>
            <ToolButton aria-label="编辑样条曲线"><SplineEditIcon /></ToolButton>
            <ToolButton aria-label="编辑阵列"><ArrayEditIcon /></ToolButton>
            <ToolRule />
            <ToolButton aria-label="编辑属性"><TagPencilIcon /></ToolButton>
            <ToolButton aria-label="块属性管理器"><BlockCardIcon /></ToolButton>
            <ToolButton aria-label="同步属性"><SyncIcon /></ToolButton>
            <ToolButton aria-label="数据提取"><ExtractIcon /></ToolButton>
            <ToolButton aria-label="清理"><BroomIcon /></ToolButton>
          </ToolBox>
          <ToolBox>
            <Grip />
            <ToolButton aria-label="标准配置"><BookEditIcon /></ToolButton>
            <ToolButton aria-label="检查标准"><BookCheckIcon /></ToolButton>
            <ToolButton aria-label="图层转换器"><LayerBookIcon /></ToolButton>
          </ToolBox>
        </ToolRow>

        <Workspace>
          <SideBox>
            <SideGrip><Grip horizontal /></SideGrip>
            {drawTools.map(([n, i]) => <SideButton key={n} aria-label={n}><Ico>{i}</Ico></SideButton>)}
          </SideBox>
          <Center>
            <Canvas>
              <Drawing />
              <Tip>端点</Tip>
              <Compass>
                <Ring /><North>北</North><West>西</West><Top>上</Top><East>东</East><South>南</South>
                <Wcs>WCS<Ico w={8} h={5}><path d="M0 .5H7L3.500 4Z" stroke="#c4c4cc" /></Ico></Wcs>
              </Compass>
              <NavBar><NavIcons /></NavBar>
            </Canvas>
            <VScroll>
              <Ico w={9} h={6}><path d="M1 5L4.500 1.500L8 5" stroke="#444" strokeWidth="2" /></Ico>
              <Thumb />
              <Ico w={9} h={6}><path d="M1 1L4.500 4.500L8 1" stroke="#444" strokeWidth="2" /></Ico>
            </VScroll>
            <HScroll>
              <Ico w={7} h={9}><path d="M5.500 1L2 4.500L5.500 8" stroke="#444" strokeWidth="2" /></Ico>
              <Ico w={7} h={9}><path d="M1.500 1L5 4.500L1.500 8" stroke="#444" strokeWidth="2" /></Ico>
            </HScroll>
            <History>
              <Past $c="#a8a8a8" $bg="rgba(90,90,90,.75)"><PastText /></Past>
              <Past $c="#cccccc" $bg="rgba(95,95,95,.85)"><PastText /></Past>
              <Past $c="#f2f2f2" $bg="rgba(100,100,100,.95)"><PastText /></Past>
            </History>
            <Command onSubmit={e => e.preventDefault()}>
              <CommandHead>
                <Ico w={6} h={17}><path d="M1 0V17M4.500 0V17" strokeWidth="1.500" strokeDasharray="2 1" /></Ico>
                <IconButton $w={17} type="button" aria-label="关闭命令行"><Cross s={10} /></IconButton>
                <IconButton $w={28} type="button" aria-label="自定义命令行"><Ico w={16}><path d="M1 14L8 7C7 4 9 1 12 1L10.500 4L12 5.500L15 4C15 7 12 9 9.500 8.500L3 15.500Z" fill="#f5f5f5" /></Ico></IconButton>
              </CommandHead>
              <IconButton $w={24} type="button" aria-label="擦除"><Ico w={16}><path d="M0 4L4 0M0 8L8 0M0 12L12 0M0 16L16 0M4 16L16 4M8 16L16 8M12 16L16 12" /><path d="M2 3H11V8H14V13H2Z" fill={LB} stroke="#fff" /></Ico></IconButton>
              <CaretL />
              <Prompt><b>WIPEOUT</b> <Han>指定下一点或</Han> [</Prompt>
              <Option type="button"><Han>闭合</Han>(<b>C</b>)</Option>
              <Option type="button"><Han>放弃</Han>(<b>U</b>)</Option>
              ]:
              <CommandInput aria-label="命令" defaultValue="c" />
              <IconButton $w={16} type="button" aria-label="命令历史"><CaretL up /></IconButton>
            </Command>
            <Highlight />
          </Center>
          <SideBox>
            <SideGrip><Grip horizontal /></SideGrip>
            {modifyTools.map(([n, i]) => <SideButton key={n} aria-label={n}><Ico>{i}</Ico></SideButton>)}
          </SideBox>
        </Workspace>

        <Footer>
          <LayoutTab $on $w={48}>模型</LayoutTab>
          <LayoutTab>布局1</LayoutTab>
          <LayoutTab>布局2</LayoutTab>
          <LayoutTab $w={24} aria-label="新建布局"><Plus /></LayoutTab>
          <Status>
            <Group><StatusButton $w={27}>模型</StatusButton></Group>
            <Group>
              <StatusButton $on aria-label="栅格"><Ico w={16}><path d="M3.500 0V16M8 0V16M12.500 0V16M0 3.500H16M0 8H16M0 12.500H16" stroke="#444" /></Ico></StatusButton>
              <StatusButton aria-label="捕捉"><Ico w={14}><path d="M1 2H14M1 7H14M1 12H14" strokeWidth="2" strokeDasharray="2 3.500" /></Ico></StatusButton>
              <StatusButton $w={15} aria-label="捕捉菜单"><CaretL /></StatusButton>
            </Group>
            <Group>
              <StatusButton $on aria-label="正交"><Ico w={18}><path d="M1.500 1V16.500H17M1.500 11.500H6.500V16.500" stroke="#333" /></Ico></StatusButton>
              <StatusButton aria-label="极轴"><Ico w={18}><circle cx="8" cy="9" r="6.500" strokeWidth="1.300" /><path d="M8 9.500H17M8 9L15 2" strokeWidth="1.300" /></Ico></StatusButton>
              <StatusButton $w={15} aria-label="极轴菜单"><CaretL /></StatusButton>
              <StatusButton aria-label="等轴测"><Ico w={16}><path d="M1 1L14 15" stroke="#c33" strokeWidth="1.300" /><path d="M7.500 0V16" stroke="#4a9a50" /></Ico></StatusButton>
              <StatusButton $w={15} aria-label="等轴测菜单"><CaretL /></StatusButton>
              <StatusButton $on aria-label="对象捕捉追踪"><Ico w={18}><path d="M1 15.500H17M2 15L15 3" stroke="#333" /><path d="M7 9l3 3" stroke="#333" strokeWidth="2" /></Ico></StatusButton>
              <StatusButton $on aria-label="对象捕捉"><Ico w={18}><path d="M7 3.500H16.500V16.500H3.500V7" stroke="#333" /><path d="M1.500 1.500H5.500V5.500H1.500Z" stroke="#333" /></Ico></StatusButton>
              <StatusButton $w={15} aria-label="对象捕捉菜单"><CaretL /></StatusButton>
            </Group>
            <Group>
              <StatusButton $on aria-label="注释可见性"><Plane kind={0} /></StatusButton>
              <StatusButton aria-label="自动缩放"><Plane kind={1} /></StatusButton>
              <StatusButton aria-label="注释比例"><Plane kind={2} /></StatusButton>
              <StatusButton $w={20}>1:1</StatusButton>
              <StatusButton $w={13} aria-label="比例菜单"><CaretL /></StatusButton>
            </Group>
            <Group>
              <StatusButton aria-label="工作空间"><Ico w={16}><circle cx="8" cy="8" r="4.500" strokeWidth="3" stroke="#555" /><path d="M8 0V3M8 13V16M0 8H3M13 8H16M2.300 2.300L4.500 4.500M11.500 11.500L13.700 13.700M13.700 2.300L11.500 4.500M4.500 11.500L2.300 13.700" strokeWidth="2.600" stroke="#555" /></Ico></StatusButton>
              <StatusButton $w={15} aria-label="工作空间菜单"><CaretL /></StatusButton>
              <StatusButton $w={25} aria-label="注释监视器"><Plus s={16} /></StatusButton>
            </Group>
            <Group><StatusButton aria-label="隔离对象"><Ico w={17}><path d="M1.500 1.500H7.500V7.500H1.500ZM8 10.500L11.500 16.500H4.500Z" /><circle cx="13.500" cy="7.500" r="3" /></Ico></StatusButton></Group>
            <Group>
              <StatusButton $w={25} aria-label="硬件加速"><Ico w={17}><path d="M2 2H11L15 6V11L9 14H2Z" fill="#2e6398" stroke="none" /><path d="M1 9H8V15H1Z" fill="#f0b020" stroke="none" /><path d="M6 12L9.500 15.500L16 9" stroke="#4fa850" strokeWidth="2.500" /><path d="M4 0V7M.5 3.500H7.500" stroke="#fff" /></Ico></StatusButton>
              <StatusButton aria-label="性能"><Ico w={17}><path d="M9 14.500H1.500V1.500H15.500V8M2 10L5 4L9 11L12 4L14 7" /><path d="M12 8L17 16.500H7Z" fill="#e87722" stroke="none" /><path d="M12 10.500v3M12 14.500v1" stroke="#fff" /></Ico></StatusButton>
            </Group>
            <Group>
              <StatusButton aria-label="全屏"><Ico w={16} h={12}><path d="M.5 .5H15.500V11.500H.5Z" strokeWidth="1.300" /><path d="M9 5L12 3M10 2.500H12.500V5M7 7L4 9M3.500 7V9.500H6" /></Ico></StatusButton>
              <StatusButton aria-label="自定义"><Ico w={16} h={14}><path d="M0 1.500H16M0 7H16M0 12.500H16" strokeWidth="2" stroke="#555" /></Ico></StatusButton>
            </Group>
          </Status>
        </Footer>
      </Frame>
    </Shell>
  );
}
